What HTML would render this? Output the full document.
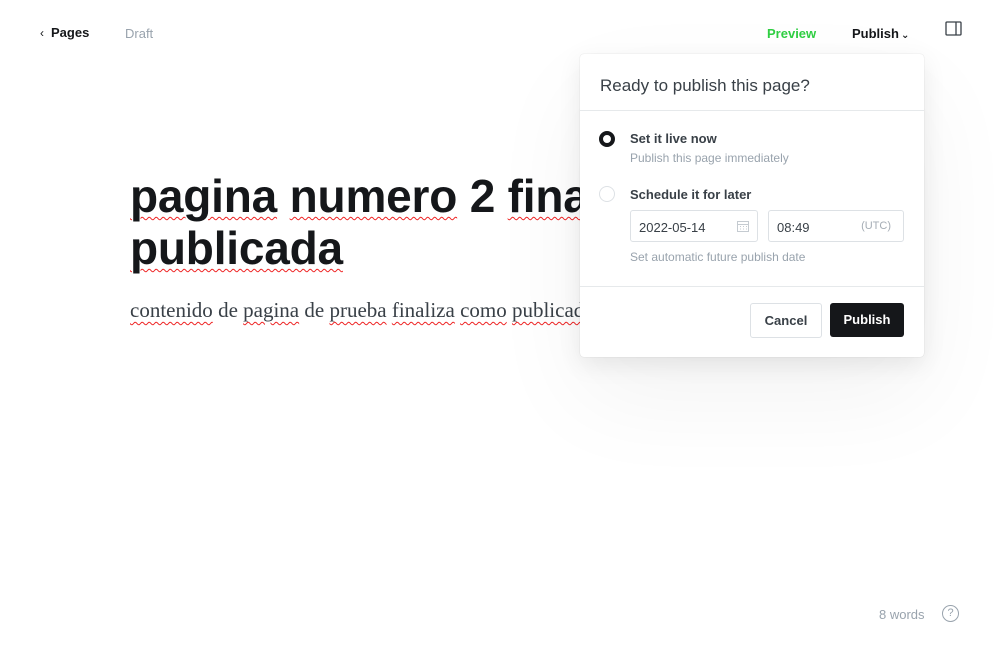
<!DOCTYPE html>
<html><head><meta charset="utf-8"><style>
*{box-sizing:border-box;margin:0;padding:0}
body{width:1000px;height:660px;background:#fff;font-family:"Liberation Sans","DejaVu Sans",sans-serif;position:relative;overflow:hidden;color:#15171a}
.a{position:absolute;white-space:nowrap}
.sq{text-decoration:underline wavy #e22;text-decoration-thickness:1px;text-underline-offset:4px}
.pop{position:absolute;z-index:5;left:580px;top:54px;width:344px;height:303px;background:#fff;border-radius:4px;box-shadow:0 0 1px rgba(0,0,0,.2),0 8px 24px rgba(0,0,0,.08),0 40px 100px 0 rgba(0,0,0,.05)}
.inp{position:absolute;top:156px;height:32px;border:1px solid #dde1e5;border-radius:3px;font-size:13px;color:#394047;padding:9px 0 0 8px}
</style></head><body>
<div class="a" style="left:40px;top:25px;font-size:13px;color:#15171a"><span style="font-size:12px;margin-right:7px">&#8249;</span><b style="font-weight:600">Pages</b></div>
<div class="a" style="left:125px;top:26px;font-size:13px;color:#99a3ad">Draft</div>
<div class="a" style="left:767px;top:26px;font-size:13px;color:#30cf43;font-weight:bold">Preview</div>
<div class="a" style="left:852px;top:26px;font-size:13px;color:#15171a;font-weight:600">Publish<span style="font-size:10px;margin-left:2px">&#8964;</span></div>
<svg class="a" style="left:945px;top:21px" width="18" height="16" viewBox="0 0 18 16"><rect x="1" y="1" width="15" height="13" rx="1" fill="none" stroke="#394047" stroke-width="1.3"/><line x1="11" y1="1" x2="11" y2="14" stroke="#394047" stroke-width="1.3"/></svg>

<div class="a" style="left:130px;top:170px;font-size:46px;font-weight:bold;line-height:52px;letter-spacing:-0.2px"><span class="sq">pagina</span> <span class="sq">numero</span> 2 <span class="sq">finalizada</span><br><span class="sq">publicada</span></div>
<div class="a" style="left:130px;top:298px;font-family:'Liberation Serif',serif;font-size:21px;color:#394047"><span class="sq">contenido</span> de <span class="sq">pagina</span> de <span class="sq">prueba</span> <span class="sq">finaliza</span> <span class="sq">como</span> <span class="sq">publicada</span></div>

<div class="pop">
<div class="a" style="left:20px;top:22px;font-size:17px;color:#394047">Ready to publish this page?</div>
<div style="position:absolute;left:0;right:0;top:56px;border-top:1px solid #e6e9eb"></div>
<div class="a" style="left:19px;top:77px;width:16px;height:16px;border-radius:50%;border:4px solid #15171a"></div>
<div class="a" style="left:50px;top:77px;font-size:13px;font-weight:bold;color:#394047">Set it live now</div>
<div class="a" style="left:50px;top:97px;font-size:12px;color:#99a3ad">Publish this page immediately</div>
<div class="a" style="left:19px;top:132px;width:16px;height:16px;border-radius:50%;border:1px solid #dde1e5"></div>
<div class="a" style="left:50px;top:133px;font-size:13px;font-weight:bold;color:#394047">Schedule it for later</div>
<div class="inp" style="left:50px;width:128px">2022-05-14<svg style="position:absolute;right:8px;top:9px" width="12" height="12" viewBox="0 0 12 12"><rect x="0.5" y="1.5" width="11" height="10" fill="none" stroke="#c5cbd1"/><path d="M0.5 4.5H11.5M3 6.5h1M6 6.5h1M9 6.5h1M3 9h1M6 9h1M9 9h1" stroke="#c5cbd1"/></svg></div>
<div class="inp" style="left:188px;width:136px">08:49<span style="position:absolute;right:12px;top:9px;font-size:11px;color:#a5adb5">(UTC)</span></div>
<div class="a" style="left:50px;top:196px;font-size:12px;color:#99a3ad">Set automatic future publish date</div>
<div style="position:absolute;left:0;right:0;top:232px;border-top:1px solid #e6e9eb"></div>
<div class="a" style="left:170px;top:249px;width:72px;height:35px;border:1px solid #dde1e5;border-radius:3px;font-size:13px;font-weight:600;color:#394047;text-align:center;line-height:33px">Cancel</div>
<div class="a" style="left:250px;top:249px;width:74px;height:34px;background:#15171a;border-radius:3px;font-size:13px;font-weight:bold;color:#fff;text-align:center;line-height:34px">Publish</div>
</div>

<div class="a" style="left:879px;top:607px;font-size:13px;color:#99a3ad">8 words</div>
<div class="a" style="left:942px;top:605px;width:17px;height:17px;border-radius:50%;border:1.2px solid #99a3ad;font-size:11px;color:#99a3ad;text-align:center;line-height:15px">?</div>
</body></html>
